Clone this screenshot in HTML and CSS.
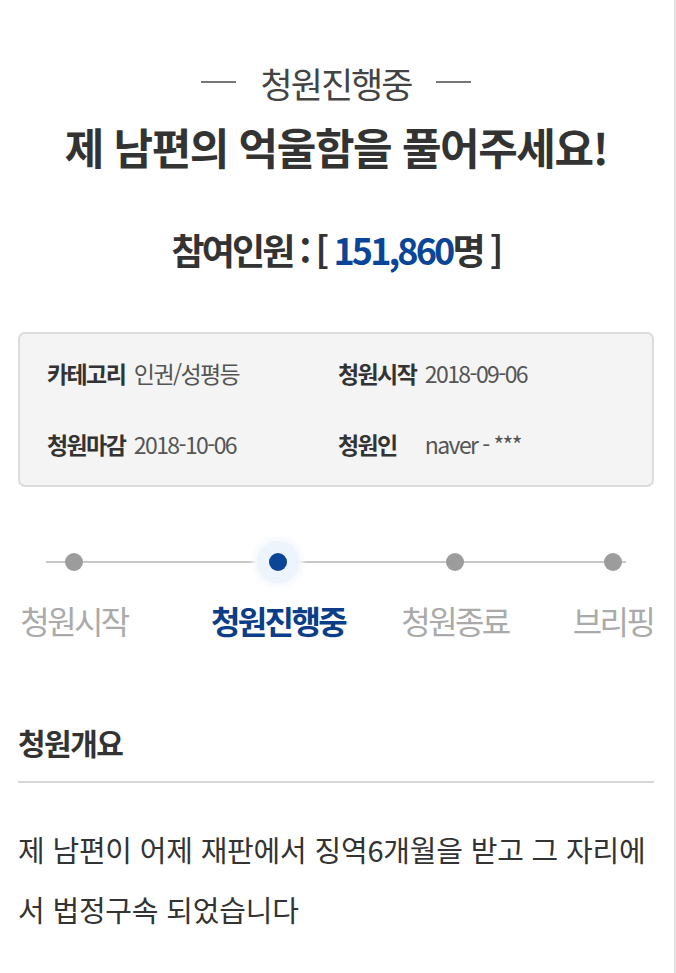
FILE: index.html
```html
<!DOCTYPE html>
<html lang="ko">
<head>
    <meta charset="utf-8">
    <title>청원진행중</title>
    <link rel="stylesheet" href="styles.css">
</head>
<body>
    <div class="page">
        <div class="status">청원진행중</div>
        <h1 class="title">제 남편의 억울함을 풀어주세요!</h1>
        <div class="count">참여인원 : [ <span class="num">151,860</span>명 ]</div>

        <div class="info">
            <div class="item"><span class="label">카테고리</span> 인권/성평등</div>
            <div class="item"><span class="label">청원시작</span> 2018-09-06</div>
            <div class="item"><span class="label">청원마감</span> 2018-10-06</div>
            <div class="item"><span class="label">청원인</span> naver - ***</div>
        </div>

        <div class="steps">
            <div class="step"><span class="dot"></span><span class="name">청원시작</span></div>
            <div class="step active"><span class="dot"></span><span class="name">청원진행중</span></div>
            <div class="step"><span class="dot"></span><span class="name">청원종료</span></div>
            <div class="step"><span class="dot"></span><span class="name">브리핑</span></div>
        </div>

        <h2 class="section">청원개요</h2>
        <p class="body">제 남편이 어제 재판에서 징역6개월을 받고 그 자리에서 법정구속 되었습니다</p>
    </div>
</body>
</html>
```

FILE: styles.css
```css
body {
    margin: 0;
    font-family: "Noto Sans CJK KR", "Noto Sans", sans-serif;
    color: #333;
    background: #fff;
}
.page {
    width: 636px;
    min-height: 973px;
    padding: 0 20px 0 18px;
    border-right: 2px solid #e0e0e0;
}
.status {
    display: flex;
    justify-content: center;
    align-items: center;
    gap: 24px;
    padding-top: 58px;
    height: 48px;
    font-size: 35px;
    letter-spacing: -2px;
    color: #444;
}
.status::before,
.status::after {
    content: "";
    width: 35px;
    height: 2px;
    background: #777;
}
.title {
    margin: 12px 0 0;
    text-align: center;
    font-size: 43px;
    line-height: 56px;
    letter-spacing: -1.4px;
    font-weight: 700;
    color: #333;
}
.count {
    margin-top: 52px;
    text-align: center;
    font-size: 36px;
    line-height: 46px;
    font-weight: 700;
    letter-spacing: -2.9px;
    color: #333;
}
.num {
    color: #0a4597;
}
.info {
    margin-top: 60px;
    display: grid;
    grid-template-columns: 291px 1fr;
    row-gap: 41px;
    padding: 24px 0 26px 27px;
    background: #f4f4f4;
    border: 2px solid #dcdcdc;
    border-radius: 7px;
    font-size: 23px;
    line-height: 30px;
    letter-spacing: -1.6px;
    color: #555;
}
.label {
    display: inline-block;
    width: 82px;
    font-weight: 700;
    color: #333;
}
.steps {
    position: relative;
    display: flex;
    margin-top: 50px;
}
.steps::before {
    content: "";
    position: absolute;
    left: 28px;
    right: 28px;
    top: 24px;
    height: 2px;
    background: #c8c8c8;
}
.step {
    position: relative;
    flex: none;
    width: 112px;
    display: flex;
    flex-direction: column;
    align-items: center;
    gap: 29px;
    padding-top: 16px;
}
.step:nth-child(2) { margin-left: 92px; }
.step:nth-child(3) { margin-left: 65px; }
.step:nth-child(4) { margin-left: 46px; }
.dot {
    width: 18px;
    height: 18px;
    border-radius: 50%;
    background: #9c9c9c;
}
.name {
    white-space: nowrap;
    font-size: 32px;
    line-height: 40px;
    letter-spacing: -2.6px;
    color: #aaa;
}
.active .dot {
    background: #0a4597;
    box-shadow: 0 0 0 12px #eef4fc, 0 0 4px 16px #f6f9fe;
}
.active .name {
    font-weight: 700;
    color: #0b3d88;
}
.section {
    margin: 82px 0 0;
    padding-bottom: 19px;
    border-bottom: 2px solid #d6d6d6;
    font-size: 30px;
    line-height: 40px;
    letter-spacing: -1.5px;
    font-weight: 700;
    color: #333;
}
.body {
    margin: 36px 0 0;
    font-size: 29px;
    line-height: 60px;
    letter-spacing: -0.2px;
    color: #333;
}
```
